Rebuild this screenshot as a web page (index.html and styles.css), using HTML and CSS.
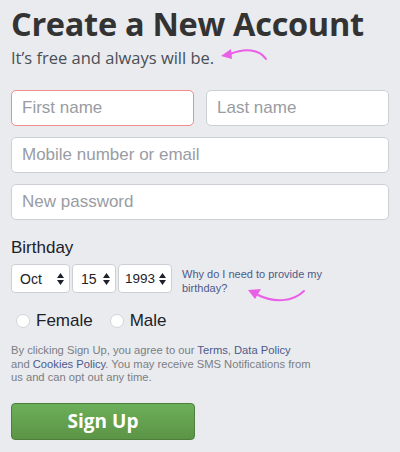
FILE: index.html
```html
<!DOCTYPE html>
<html lang="en">
<head>
  <meta charset="UTF-8" />
  <title>Create a New Account</title>
  <link rel="stylesheet" href="styles.css">
</head>
<body>
  <div class="signup">
    <h1>Create a New Account</h1>
    <p class="tagline">It’s free and always will be.</p>
    <svg class="arrow arrow-top" width="52" height="20" viewBox="0 0 52 20">
      <path d="M47 13 C40 3 26 2 11 8" fill="none" stroke="#e95fe6" stroke-width="2" stroke-linecap="round"/>
      <path d="M2 10 L12 3 L13 13 Z" fill="#e95fe6"/>
    </svg>

    <div class="row">
      <input type="text" class="field error" placeholder="First name">
      <input type="text" class="field" placeholder="Last name">
    </div>
    <input type="text" class="field" placeholder="Mobile number or email">
    <input type="password" class="field" placeholder="New password">

    <div class="label">Birthday</div>
    <div class="birthday">
      <div class="select month">Oct<svg class="updown" width="7" height="12" viewBox="0 0 7 12"><path d="M3.5 0 L7 5 L0 5 Z M0 7 L7 7 L3.5 12 Z" fill="#1d2129"/></svg></div>
      <div class="select day">15<svg class="updown" width="7" height="12" viewBox="0 0 7 12"><path d="M3.5 0 L7 5 L0 5 Z M0 7 L7 7 L3.5 12 Z" fill="#1d2129"/></svg></div>
      <div class="select year">1993<svg class="updown" width="7" height="12" viewBox="0 0 7 12"><path d="M3.5 0 L7 5 L0 5 Z M0 7 L7 7 L3.5 12 Z" fill="#1d2129"/></svg></div>
      <a href="#" class="why">Why do I need to provide my birthday?</a>
    </div>
    <svg class="arrow arrow-bottom" width="62" height="18" viewBox="0 0 62 18">
      <path d="M58 3 C47 14 28 15 12 7" fill="none" stroke="#e95fe6" stroke-width="2" stroke-linecap="round"/>
      <path d="M2 2 L15 1 L9 11 Z" fill="#e95fe6"/>
    </svg>

    <div class="gender">
      <label><span class="radio"></span>Female</label>
      <label><span class="radio"></span>Male</label>
    </div>

    <p class="legal">
      By clicking Sign Up, you agree to our <a href="#">Terms</a>, <a href="#">Data Policy</a><br>
      and <a href="#">Cookies Policy</a>. You may receive SMS Notifications from<br>
      us and can opt out any time.
    </p>

    <button class="submit">Sign Up</button>
  </div>
</body>
</html>
```

FILE: styles.css
```css
body {
  margin: 0;
  background-color: #e9ebee;
  font-family: 'Liberation Sans', Arial, sans-serif;
  color: #1d2129;
}

.signup {
  position: relative;
  padding: 4px 11px 0 11px;
}

h1 {
  font-family: 'Open Sans', sans-serif;
  font-weight: 700;
  font-size: 32.5px;
  color: #333;
  margin: 0;
  line-height: 40px;
  letter-spacing: -0.3px;
}

.tagline {
  font-family: 'Open Sans', sans-serif;
  font-size: 16.5px;
  color: #4b4f56;
  margin: 3px 0 0 0;
  line-height: 22px;
}

.arrow {
  position: absolute;
}

.arrow-top {
  left: 219px;
  top: 46px;
}

.arrow-bottom {
  left: 246px;
  top: 288px;
}

.row {
  display: flex;
  gap: 12px;
  margin-top: 21px;
}

.field {
  display: block;
  box-sizing: border-box;
  width: 100%;
  height: 36px;
  margin-bottom: 11px;
  padding: 0 10px;
  border: 1px solid #ccd0d5;
  border-radius: 5px;
  background: #fff;
  font-family: 'Liberation Sans', Arial, sans-serif;
  font-size: 17px;
  color: #1d2129;
}

.row .field {
  flex: 1;
}

.field::placeholder {
  color: #999ca3;
}

.field.error {
  border-color: #f28b8b;
}

.label {
  font-size: 17px;
  margin-top: 17px;
  line-height: 22px;
}

.birthday {
  display: flex;
  align-items: flex-start;
  gap: 2px;
  margin-top: 5px;
}

.select {
  box-sizing: border-box;
  height: 29px;
  display: flex;
  align-items: center;
  justify-content: space-between;
  padding: 0 5px 0 8px;
  background: #fff;
  border: 1px solid #ccd0d5;
  border-radius: 4px;
  font-size: 14px;
}

.month { width: 59px; }
.day { width: 44px; }
.year { width: 54px; padding-left: 6px; font-size: 13.5px; }

.why {
  margin-left: 8px;
  margin-top: 3px;
  width: 150px;
  font-size: 11px;
  line-height: 14px;
  color: #4d5a8a;
  text-decoration: none;
}

.gender {
  display: flex;
  gap: 17px;
  margin-top: 16px;
  padding-left: 5px;
  font-size: 17px;
}

.gender label {
  display: flex;
  align-items: center;
  gap: 6px;
}

.radio {
  width: 12px;
  height: 12px;
  border-radius: 50%;
  background: #fff;
  border: 1px solid #d3d5d9;
}

.legal {
  font-size: 11.2px;
  line-height: 13.5px;
  color: #7b7e84;
  margin: 13px 0 0 0;
}

.legal a {
  color: #4d5a8a;
  text-decoration: none;
}

.submit {
  margin-top: 18px;
  width: 184px;
  height: 37px;
  border: 1px solid #4f7f3a;
  border-radius: 4px;
  background: linear-gradient(#6caf5a, #5b9446);
  color: #fff;
  font-family: 'Open Sans', sans-serif;
  font-weight: 700;
  font-size: 19px;
  cursor: pointer;
}
```
